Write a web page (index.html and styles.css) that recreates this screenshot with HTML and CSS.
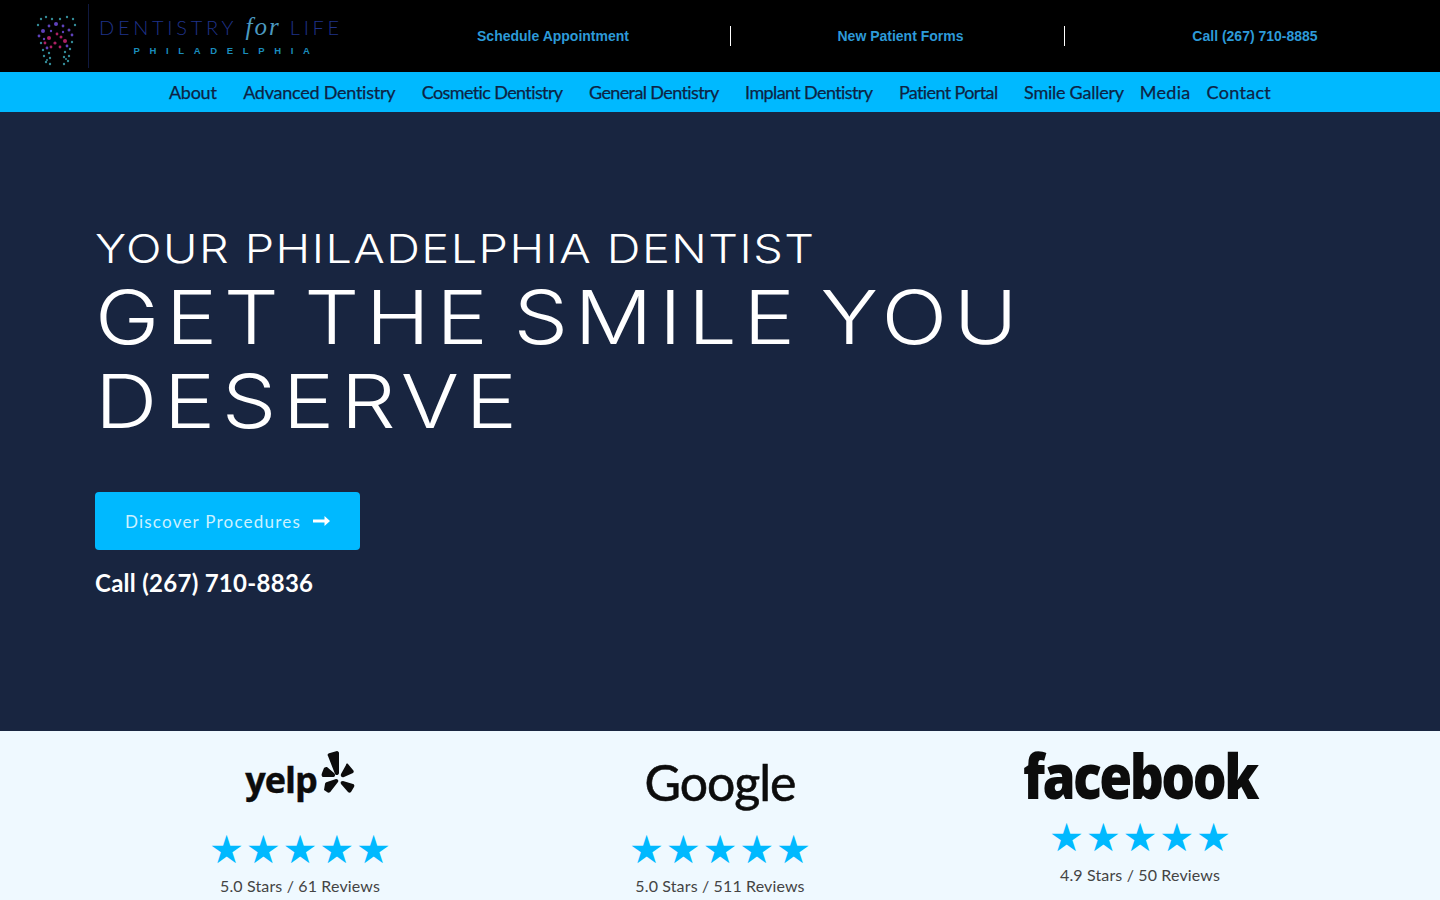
FILE: index.html
```html
<!DOCTYPE html>
<html>
<head>
    <title>Dentistry for Life Philadelphia</title>
    <meta charset="utf-8">
    <meta name="viewport" content="width=device-width, initial-scale=1"/>
    <link rel="stylesheet" href="styles.css">
</head>
<body>
    <header class="topbar">
        <a class="logo" href="#">
            <svg class="tooth" width="42" height="52" viewBox="0 0 42 52">
                <g fill="#3a9aa8">
                    <circle cx="5" cy="5" r="1.2"/><circle cx="10" cy="3" r="1.2"/><circle cx="16" cy="5" r="1.2"/><circle cx="24" cy="5" r="1.2"/><circle cx="31" cy="3" r="1.2"/><circle cx="37" cy="5" r="1.2"/>
                    <circle cx="2" cy="11" r="1.2"/><circle cx="39" cy="11" r="1.2"/><circle cx="5" cy="29" r="1.2"/><circle cx="36" cy="28" r="1.2"/>
                    <circle cx="7" cy="36" r="1.2"/><circle cx="34" cy="35" r="1.2"/><circle cx="8" cy="42" r="1.2"/><circle cx="14" cy="44" r="1.2"/><circle cx="28" cy="43" r="1.2"/><circle cx="33" cy="42" r="1.2"/><circle cx="10" cy="48" r="1.2"/><circle cx="14" cy="50" r="1.2"/><circle cx="28" cy="50" r="1.2"/><circle cx="32" cy="47" r="1.2"/>
                    <circle cx="13" cy="39" r="1.2"/><circle cx="29" cy="38" r="1.2"/><circle cx="11" cy="46" r="1"/><circle cx="30" cy="45" r="1"/>
                </g>
                <g fill="#6a4ad0">
                    <circle cx="7" cy="17" r="2"/><circle cx="20" cy="10" r="2"/><circle cx="33" cy="16" r="1.5"/><circle cx="13" cy="12" r="1.4"/><circle cx="27" cy="12" r="1.4"/><circle cx="36" cy="21" r="1.4"/><circle cx="3" cy="22" r="1.4"/><circle cx="11" cy="34" r="1.4"/><circle cx="31" cy="32" r="1.4"/><circle cx="8" cy="25" r="1.2"/><circle cx="15" cy="17" r="1.2"/><circle cx="27" cy="18" r="1.2"/>
                </g>
                <g fill="#c0246e">
                    <circle cx="13" cy="24" r="2"/><circle cx="19" cy="29" r="1.6"/><circle cx="25" cy="23" r="1.5"/><circle cx="29" cy="27" r="2"/><circle cx="9" cy="29" r="1.4"/><circle cx="21" cy="20" r="1.4"/><circle cx="15" cy="33" r="1.4"/><circle cx="24" cy="33" r="1.4"/>
                </g>
            </svg>
            <span class="logo-rule"></span>
            <span class="logo-text">
                <span class="logo-name">DENTISTRY <em>for</em> LIFE</span>
                <span class="logo-city">PHILADELPHIA</span>
            </span>
        </a>
        <div class="toplinks">
            <a class="toplink one" href="#">Schedule Appointment</a>
            <a class="toplink two" href="#">New Patient Forms</a>
            <a class="toplink three" href="#">Call (267) 710-8885</a>
        </div>
    </header>

    <nav class="mainnav">
        <a href="#">About</a>
        <a href="#">Advanced Dentistry</a>
        <a class="narrow" href="#">Cosmetic Dentistry</a>
        <a class="narrow" href="#">General Dentistry</a>
        <a class="narrow" href="#">Implant Dentistry</a>
        <a class="narrow" href="#">Patient Portal</a>
        <a class="tight" href="#">Smile Gallery</a>
        <a class="tight wide" href="#">Media</a>
        <a class="tight wide" href="#">Contact</a>
    </nav>

    <section class="hero">
        <h2>YOUR PHILADELPHIA DENTIST</h2>
        <h1>GET THE SMILE YOU DESERVE</h1>
        <a class="btn" href="#">
            Discover Procedures
            <svg width="17" height="10" viewBox="0 0 17 10"><path d="M0 3.6h11.5V0l5.5 5-5.5 5V6.4H0z" fill="#fff"/></svg>
        </a>
        <a class="herophone" href="#">Call (267) 710-8836</a>
    </section>

    <section class="reviews">
        <div class="review">
            <div class="brand brand-yelp">
                <span class="yelp">yelp</span>
                <svg width="34" height="50" viewBox="0 0 34 50">
                    <path d="M9 2l7-2c1 0 2 1 2 2v20c0 2-3 3-4 1L7 5c-1-1 0-3 2-3z" fill="#0c0c0c"/>
                    <path d="M1 22l2-5c1-1 2-1 3-1l7 6c2 2 1 4-1 4L2 26c-1 0-2-2-1-4z" fill="#0c0c0c"/>
                    <path d="M3 39l1-6c0-1 1-2 2-2l9-3c2 0 3 2 2 3l-7 9c-1 2-3 2-4 1z" fill="#0c0c0c"/>
                    <path d="M27 13l5 6c1 1 1 2 0 3l-9 4c-2 1-4-1-3-3l5-9c0-1 1-2 2-1z" fill="#0c0c0c"/>
                    <path d="M22 30l10 3c1 0 2 2 1 3l-3 5c-1 1-2 1-3 0l-7-8c-1-2 0-3 2-3z" fill="#0c0c0c"/>
                </svg>
            </div>
            <div class="stars"><i>★</i><i>★</i><i>★</i><i>★</i><i>★</i></div>
            <p>5.0 Stars / 61 Reviews</p>
        </div>
        <div class="review">
            <div class="brand brand-google">Google</div>
            <div class="stars"><i>★</i><i>★</i><i>★</i><i>★</i><i>★</i></div>
            <p>5.0 Stars / 511 Reviews</p>
        </div>
        <div class="review fb">
            <div class="brand brand-fb"><span>facebook</span></div>
            <div class="stars"><i>★</i><i>★</i><i>★</i><i>★</i><i>★</i></div>
            <p>4.9 Stars / 50 Reviews</p>
        </div>
    </section>
</body>
</html>
```

FILE: styles.css
```css
*{
    box-sizing:border-box;
}
body{
    margin:0;
    font-family:"Liberation Sans",Arial,sans-serif;
    background:#182540;
}
a{
    text-decoration:none;
}

/* top bar */
.topbar{
    display:flex;
    height:72px;
    background:#000;
}
.logo{
    display:flex;
    align-items:center;
    width:376px;
    padding-left:36px;
}
.tooth{
    flex:none;
    margin-top:7px;
    opacity:.9;
}
.logo-rule{
    width:1px;
    height:64px;
    margin:0 10px 0 10px;
    background:#10193f;
}
.logo-text{
    display:flex;
    flex-direction:column;
    align-items:center;
    gap:4px;
}
.logo-name{
    font-family:"Lato",sans-serif;
    font-weight:300;
    font-size:20px;
    line-height:26px;
    letter-spacing:3.72px;
    color:#1f3288;
    white-space:nowrap;
}
.logo-name em{
    font-family:"Liberation Serif",serif;
    font-size:25px;
    color:#4b9ac0;
    letter-spacing:2px;
}
.logo-city{
    padding-left:11px;
    font-size:9.5px;
    font-weight:700;
    line-height:14px;
    letter-spacing:9.65px;
    color:#1a8cbc;
}
.toplinks{
    flex:1;
    display:flex;
    align-items:center;
}
.toplink{
    display:flex;
    align-items:center;
    justify-content:center;
    height:20px;
    font-size:14px;
    font-weight:700;
    color:#2d9ad8;
}
.one{
    width:355px;
    border-right:1px solid #fff;
}
.two{
    width:334px;
    padding-left:6px;
    border-right:1px solid #fff;
}
.three{
    width:375px;
    padding-left:5px;
}

/* blue menu */
.mainnav{
    display:flex;
    justify-content:center;
    align-items:center;
    height:40px;
    background:#00b9ff;
}
.mainnav a{
    margin-right:26.5px;
    font-family:"Lato",sans-serif;
    font-size:18px;
    letter-spacing:-.25px;
    -webkit-text-stroke:.25px #0d2344;
    color:#0d2344;
    white-space:nowrap;
}
.mainnav a.narrow{
    letter-spacing:-.62px;
}
.mainnav a.wide{
    letter-spacing:.3px;
}
.mainnav a.tight{
    margin-right:16px;
}
.mainnav a:last-child{
    margin-right:0;
}

/* hero */
.hero{
    height:619px;
    padding:115px 0 0 95px;
    background:#182540;
    color:#fff;
}
.hero h2{
    width:900px;
    margin:0;
    font-family:"Inter",sans-serif;
    font-weight:300;
    font-size:40px;
    line-height:44px;
    letter-spacing:1.25px;
    white-space:nowrap;
    transform:scaleX(1.17);
    transform-origin:left;
}
.hero h1{
    width:900px;
    margin:4px 0 0;
    font-family:"Inter",sans-serif;
    font-weight:300;
    font-size:74px;
    line-height:84px;
    letter-spacing:5.5px;
    word-spacing:-10px;
    transform:scaleX(1.17);
    transform-origin:left;
}
.btn{
    display:flex;
    align-items:center;
    gap:12px;
    width:265px;
    height:58px;
    margin-top:49px;
    padding-left:30px;
    border-radius:4px;
    background:#00b9ff;
    font-family:"Lato",sans-serif;
    font-size:17px;
    letter-spacing:1.22px;
    color:#cdf1ff;
}
.herophone{
    display:block;
    margin-top:19px;
    font-family:"Lato",sans-serif;
    font-size:24px;
    line-height:28px;
    font-weight:700;
    letter-spacing:.28px;
    color:#fff;
}

/* review logos */
.reviews{
    display:grid;
    grid-template-columns:repeat(3,420px);
    justify-content:center;
    height:169px;
    overflow:hidden;
    background:#eff9ff;
    color:#444;
    text-align:center;
}
.brand{
    display:flex;
    align-items:center;
    justify-content:center;
    height:72px;
    padding-top:18px;
    color:#0c0c0c;
}
.brand-yelp{
    gap:4px;
}
.yelp{
    padding-top:6px;
    font-family:"Open Sans",sans-serif;
    font-weight:700;
    font-size:36px;
    letter-spacing:-1px;
    -webkit-text-stroke:.4px #0c0c0c;
}
.brand-google{
    padding-top:30px;
    font-family:"Lato",sans-serif;
    font-size:50px;
    letter-spacing:-1px;
    -webkit-text-stroke:.6px #0c0c0c;
}
.brand-fb{
    padding-top:16px;
    font-family:"Open Sans",sans-serif;
    font-weight:800;
    font-size:62px;
    letter-spacing:-3px;
}
.brand-fb span{
    transform:scaleX(.86);
}
.stars{
    display:flex;
    justify-content:center;
    gap:.75px;
    margin-top:29px;
    height:36px;
    color:#00b9ff;
    font-family:"DejaVu Sans",sans-serif;
    font-size:39px;
    line-height:36px;
}
.stars i{
    width:36px;
    font-style:normal;
}
.review p{
    margin:8px 0 0;
    font-family:"Lato",sans-serif;
    font-size:16px;
    line-height:20px;
    letter-spacing:.14px;
}
.fb .stars{
    margin-top:17px;
}
.fb p{
    margin-top:9px;
}
```
